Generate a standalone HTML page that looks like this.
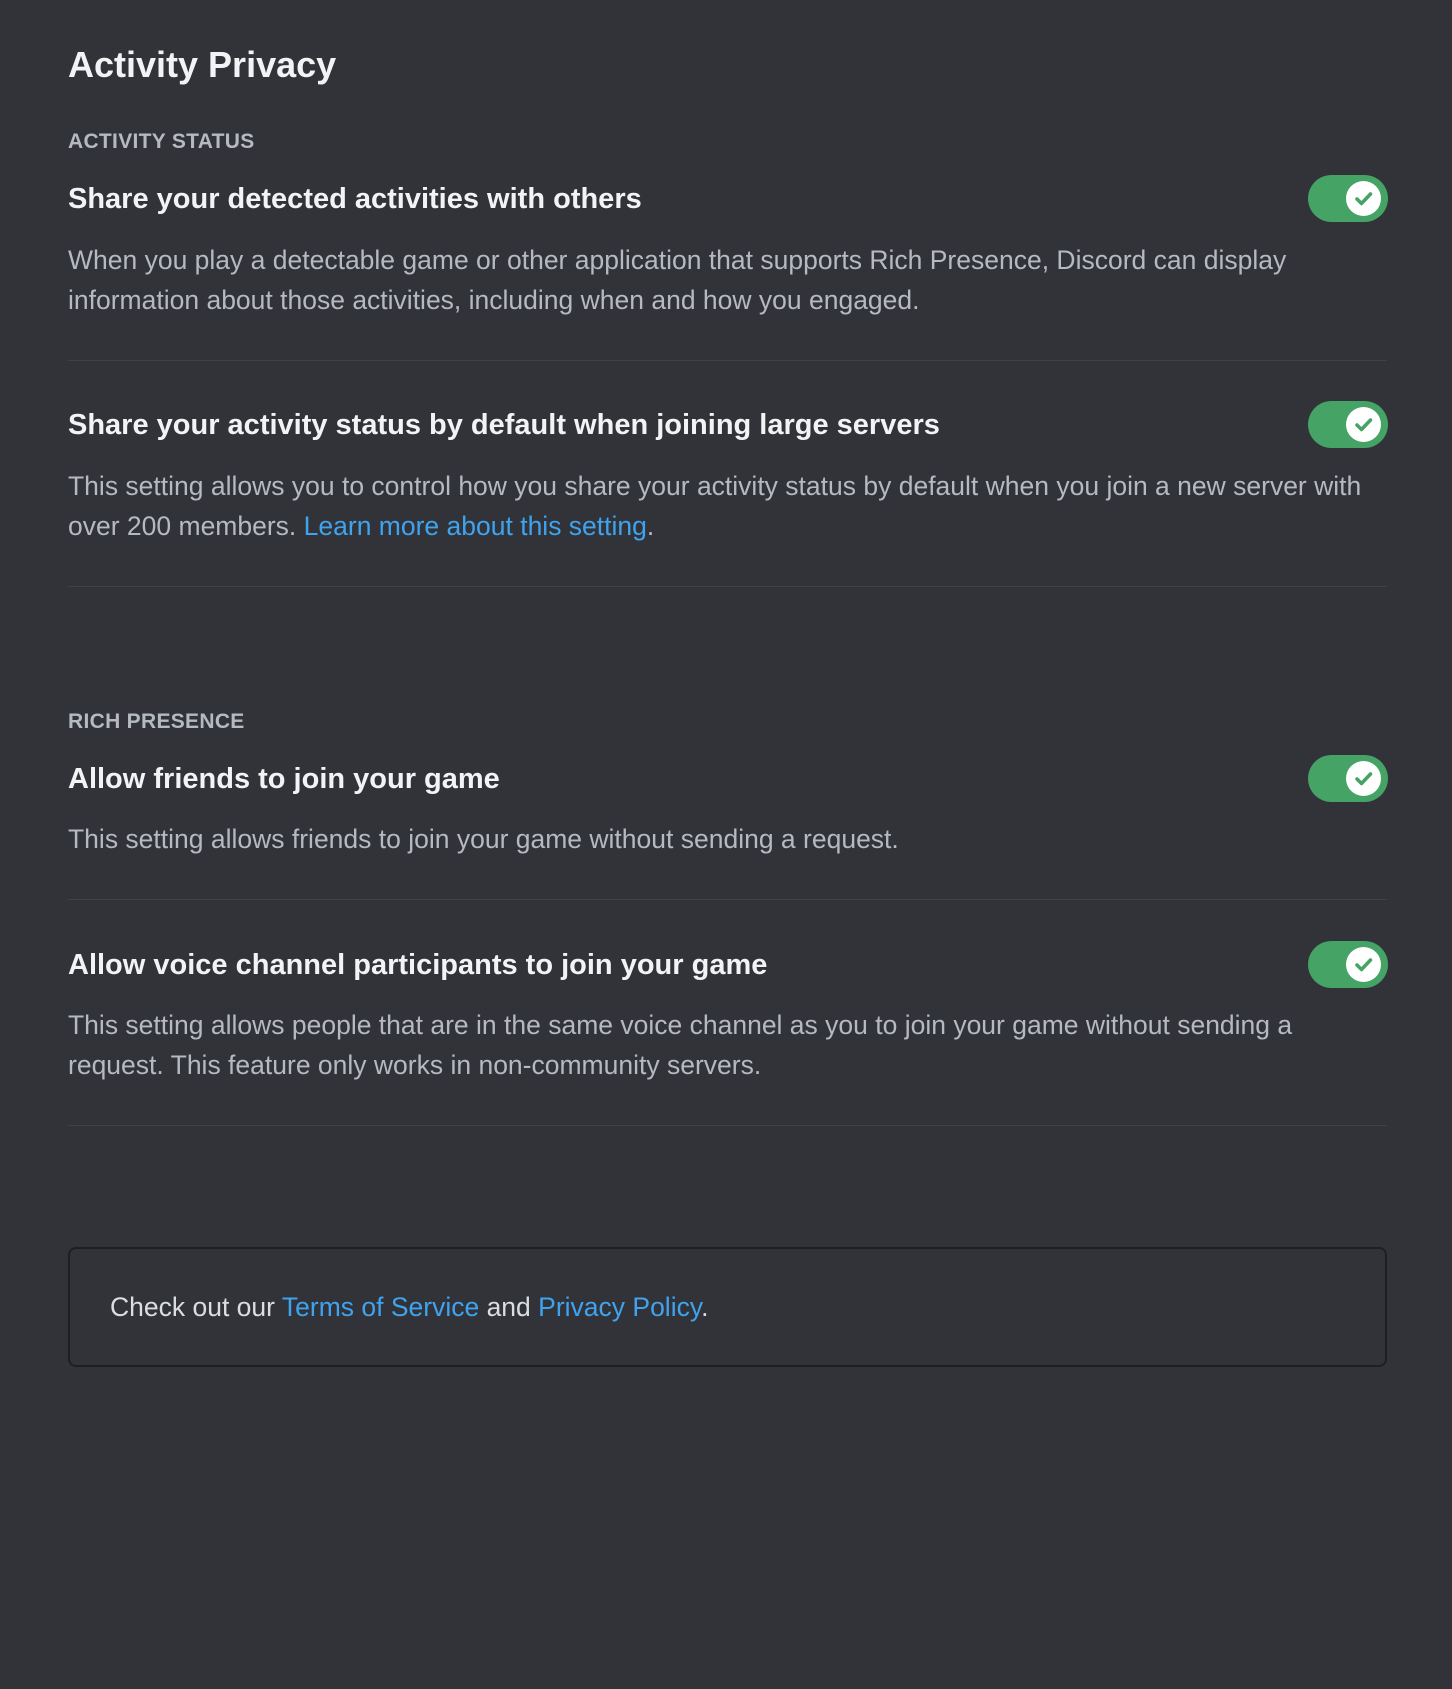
<!DOCTYPE html><html><head><style>
body{margin:0;background:#313338;width:1452px;height:1689px;font-family:"Liberation Sans",sans-serif;position:relative;overflow:hidden}
.a{position:absolute;left:68px;white-space:nowrap;line-height:40px}
.ti{font-size:36px;color:#f2f3f5;font-weight:bold}
.h{font-size:21px;font-weight:bold;color:#b5bac1;letter-spacing:.3px}
.t{font-size:29px;font-weight:bold;color:#f2f3f5}
.d{font-size:26.5px;color:#b5bac1;line-height:40px}
.l{color:#3fa3ee}
.div{position:absolute;left:68px;width:1319px;height:1px;background:#3f4147}
.tg{position:absolute;left:1308px;width:80px;height:47px;border-radius:24px;background:#45a366}
.tg svg{position:absolute;right:7px;top:6px}
.box{position:absolute;left:68px;top:1247px;width:1315px;height:116px;border:2px solid #1e1f22;border-radius:8px}
</style></head><body>
<div class="a ti" style="top:45px">Activity Privacy</div>
<div class="a h" style="top:122px">ACTIVITY STATUS</div>
<div class="a t" style="top:179px">Share your detected activities with others</div>
<div class="a d" style="top:240px">When you play a detectable game or other application that supports Rich Presence, Discord can display<br>information about those activities, including when and how you engaged.</div>
<div class="div" style="top:360px"></div>
<div class="a t" style="top:405px">Share your activity status by default when joining large servers</div>
<div class="a d" style="top:466px">This setting allows you to control how you share your activity status by default when you join a new server with<br>over 200 members. <span class="l">Learn more about this setting</span>.</div>
<div class="div" style="top:586px"></div>
<div class="a h" style="top:702px">RICH PRESENCE</div>
<div class="a t" style="top:759px">Allow friends to join your game</div>
<div class="a d" style="top:819px">This setting allows friends to join your game without sending a request.</div>
<div class="div" style="top:899px"></div>
<div class="a t" style="top:945px">Allow voice channel participants to join your game</div>
<div class="a d" style="top:1005px">This setting allows people that are in the same voice channel as you to join your game without sending a<br>request. This feature only works in non-community servers.</div>
<div class="div" style="top:1125px"></div>
<div class="box"></div>
<div class="a" style="left:110px;top:1287px;font-size:26.5px;color:#dbdee1">Check out our <span class="l">Terms of Service</span> and <span class="l">Privacy Policy</span>.</div>
<div class="tg" style="top:175px"><svg width="35" height="35" viewBox="0 0 35 35"><circle cx="17.5" cy="17.5" r="17.5" fill="#fff"/><path d="M11 18l4.5 4.5 9-9.5" stroke="#45a366" stroke-width="3.5" fill="none" stroke-linecap="round" stroke-linejoin="round"/></svg></div>
<div class="tg" style="top:401px"><svg width="35" height="35" viewBox="0 0 35 35"><circle cx="17.5" cy="17.5" r="17.5" fill="#fff"/><path d="M11 18l4.5 4.5 9-9.5" stroke="#45a366" stroke-width="3.5" fill="none" stroke-linecap="round" stroke-linejoin="round"/></svg></div>
<div class="tg" style="top:755px"><svg width="35" height="35" viewBox="0 0 35 35"><circle cx="17.5" cy="17.5" r="17.5" fill="#fff"/><path d="M11 18l4.5 4.5 9-9.5" stroke="#45a366" stroke-width="3.5" fill="none" stroke-linecap="round" stroke-linejoin="round"/></svg></div>
<div class="tg" style="top:941px"><svg width="35" height="35" viewBox="0 0 35 35"><circle cx="17.5" cy="17.5" r="17.5" fill="#fff"/><path d="M11 18l4.5 4.5 9-9.5" stroke="#45a366" stroke-width="3.5" fill="none" stroke-linecap="round" stroke-linejoin="round"/></svg></div>
</body></html>
